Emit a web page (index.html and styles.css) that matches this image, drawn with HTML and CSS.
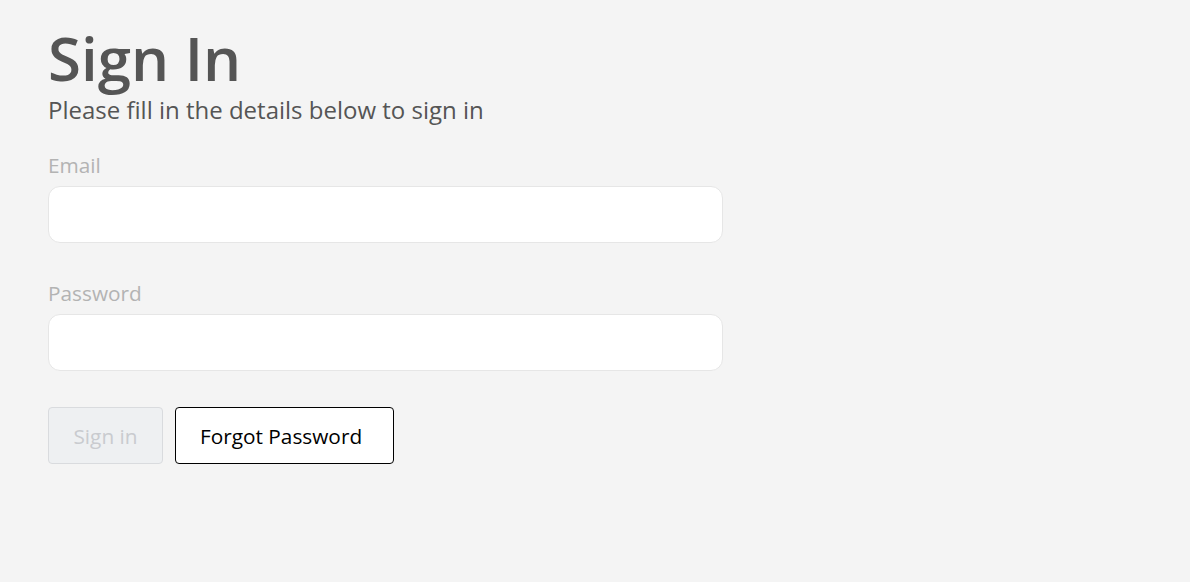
FILE: index.html
```html
<!DOCTYPE html>
<html lang="en">
<head>
<meta charset="utf-8">
<title>Sign In</title>
<link rel="stylesheet" href="styles.css">
</head>
<body>
<main class="page">
  <h1 class="title">Sign In</h1>
  <p class="subtitle">Please fill in the details below to sign in</p>
  <form class="form">
    <div class="field">
      <label class="label" for="email">Email</label>
      <input class="input" id="email" type="email">
    </div>
    <div class="field">
      <label class="label" for="password">Password</label>
      <input class="input" id="password" type="password">
    </div>
    <div class="actions">
      <button class="btn btn-primary" type="button" disabled>Sign in</button>
      <button class="btn btn-outline" type="button">Forgot Password</button>
    </div>
  </form>
</main>
</body>
</html>
```

FILE: styles.css
```css
* { box-sizing: border-box; }
html, body { margin: 0; padding: 0; }
body {
  background: #f4f4f4;
  font-family: "Open Sans", "Liberation Sans", sans-serif;
  color: #555;
}
.page {
  padding: 22px 48px 0;
  width: 722px;
  box-sizing: content-box;
}
.title {
  margin: 0;
  font-size: 60px;
  line-height: 72px;
  font-weight: 600;
  color: #555555;
}
.subtitle {
  margin: 0;
  font-size: 24px;
  line-height: 32px;
  color: #555555;
}
.form {
  margin-top: 25px;
  display: flex;
  flex-direction: column;
  gap: 36px;
}
.field {
  display: flex;
  flex-direction: column;
}
.label {
  font-size: 20.8px;
  line-height: 28px;
  color: #b3b3b3;
  margin-bottom: 7px;
}
.input {
  width: 675px;
  height: 57px;
  border: 1px solid #e6e6e6;
  border-radius: 12px;
  background: #fff;
  font-family: inherit;
  font-size: 20px;
  padding: 0 16px;
  outline: none;
}
.actions {
  display: flex;
  gap: 12px;
}
.btn {
  height: 57px;
  padding: 0 24px;
  font-family: inherit;
  font-size: 20.8px;
  border-radius: 4px;
  cursor: pointer;
}
.btn-primary {
  width: 115px;
  background: #eef0f2;
  border: 1px solid #d9dbde;
  color: #c9cbcf;
}
.btn-outline {
  width: 219px;
  padding: 0 30px 0 24px;
  text-align: left;
  background: #ffffff;
  border: 1px solid #000000;
  color: #000000;
}
```
